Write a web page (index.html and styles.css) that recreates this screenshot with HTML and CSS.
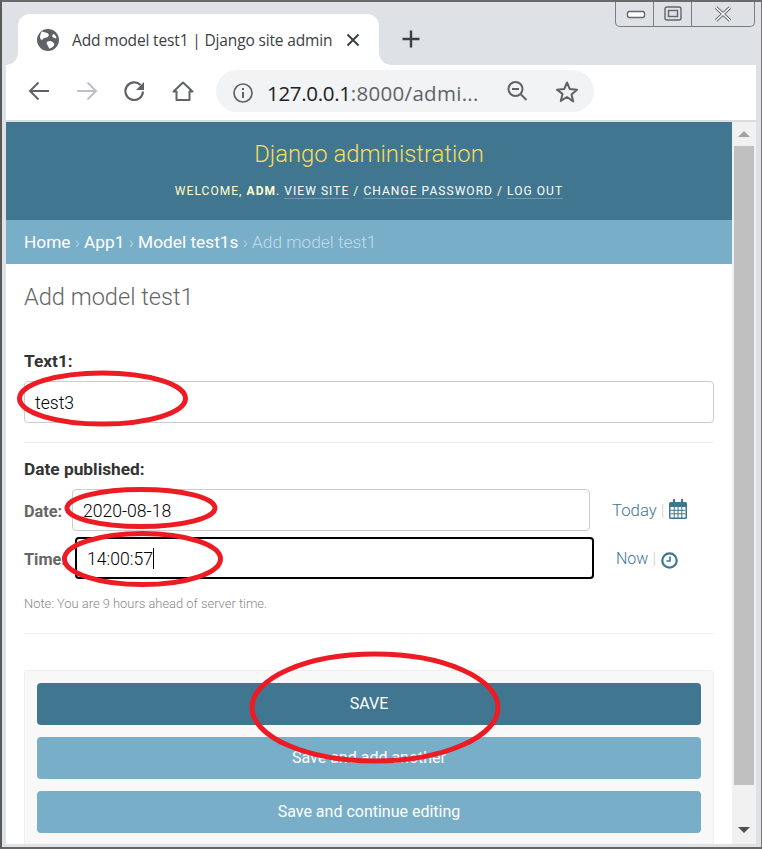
FILE: index.html
```html
<!DOCTYPE html>
<html lang="en">
<head>
<meta charset="utf-8">
<title>Add model test1 | Django site admin</title>
<link rel="stylesheet" href="styles.css">
</head>
<body>
<div class="window">
  <div class="tabstrip">
    <div class="tab">
      <svg class="globe" width="24" height="24" viewBox="0 0 24 24"><circle cx="12" cy="12" r="11" fill="#5f6368"/><path d="M6 3.500c2 1 5 1 6.500 2.500 1 1.500-.5 3-2 3.500-1.500.5-3 0-3.500 1.500-.5 1.500-2 1-3-1C4 8 4.500 5 6 3.500zM11 14c2-1.500 4-1 5.500 0 1.500 1 2 2 1.500 3.500-1 1.500-3 3-5 3-.5-2-1-3-2-4-.5-1-.5-1.800 0-2.500zM17 6c1.500 0 3 2 3.500 4-1.500.5-3 0-4-1-.5-1 0-2 .5-3z" fill="#fff"/></svg>
      <span class="tab-title">Add model test1 | Django site admin</span>
      <svg class="tab-close" width="14" height="14" viewBox="0 0 14 14"><path d="M1.500 1.500l11 11M12.500 1.500l-11 11" stroke="#3c4043" stroke-width="2" fill="none"/></svg>
    </div>
    <svg class="new-tab" width="20" height="20" viewBox="0 0 20 20"><path d="M10 1.500v17M1.500 10h17" stroke="#3c4043" stroke-width="2.400" fill="none"/></svg>
  </div>
  <div class="toolbar">
    <svg class="tool" width="24" height="24" viewBox="0 0 24 24"><path d="M22 12H3.500M11.500 3.500L3 12l8.500 8.500" stroke="#5f6368" stroke-width="2" fill="none"/></svg>
    <svg class="tool" width="24" height="24" viewBox="0 0 24 24"><path d="M2 12h18.500M12.500 3.500L21 12l-8.500 8.500" stroke="#bdc1c6" stroke-width="2" fill="none"/></svg>
    <svg class="tool" width="24" height="24" viewBox="0 0 24 24"><path d="M20 12.500A8.800 8.800 0 1 1 17.500 6" stroke="#5f6368" stroke-width="2.200" fill="none"/><path d="M21 3v8h-8z" fill="#5f6368"/></svg>
    <svg class="tool" width="24" height="24" viewBox="0 0 24 24"><path d="M12 3.500L2.500 12.500H5.500V21H18.500V12.500H21.500z" stroke="#5f6368" stroke-width="2" stroke-linejoin="round" fill="none"/></svg>
    <div class="omnibox">
      <svg class="info" width="20" height="20" viewBox="0 0 20 20"><circle cx="10" cy="10" r="9" stroke="#5f6368" stroke-width="1.700" fill="none"/><path d="M10 9v6M10 5v2" stroke="#5f6368" stroke-width="2" fill="none"/></svg>
      <span class="url"><span class="host">127.0.0.1</span>:8000/admi...</span>
      <svg class="zoomout" width="22" height="22" viewBox="0 0 22 22"><circle cx="9.500" cy="9" r="7" stroke="#5f6368" stroke-width="2" fill="none"/><path d="M6 9h7M14.500 14l6 6" stroke="#5f6368" stroke-width="2" fill="none"/></svg>
      <svg class="star" width="24" height="24" viewBox="0 0 24 24"><path d="M12 2.500l2.800 6.600 7.200.6-5.500 4.700 1.700 7L12 17l-6.200 3.900 1.700-7L2 9.700l7.200-.6z" stroke="#5f6368" stroke-width="2" stroke-linejoin="round" fill="none"/></svg>
    </div>
  </div>
  <div class="viewport">
    <main class="page">
      <header class="site-header">
        <h1 class="branding">Django administration</h1>
        <div class="user-tools">WELCOME, <strong>ADM</strong>. <a class="tool-link">VIEW SITE</a> / <a class="tool-link">CHANGE PASSWORD</a> / <a class="tool-link">LOG OUT</a></div>
      </header>
      <nav class="breadcrumbs"><a>Home</a> › <a>App1</a> › <a>Model test1s</a> › Add model test1</nav>
      <section class="content">
        <h2 class="title">Add model test1</h2>
        <div class="form-row">
          <div class="field-label">Text1:</div>
          <div class="input input-full">test3</div>
        </div>
        <div class="form-row form-row-date">
          <div class="field-label">Date published:</div>
          <div class="split-row">
            <span class="sub-label sub-label-date">Date:</span>
            <div class="input input-date">2020-08-18</div>
            <span class="shortcuts shortcuts-date"><a>Today</a> <span class="sep">|</span>
              <svg class="cal" width="18" height="20" viewBox="0 0 18 20"><path d="M1.500 3h15a1.500 1.500 0 0 1 1.500 1.500v14a1.500 1.500 0 0 1-1.500 1.500h-15A1.500 1.500 0 0 1 0 18.500v-14A1.500 1.500 0 0 1 1.500 3z" fill="#417690"/><path d="M1.500 8h15v10.500h-15z" fill="#fff"/><path d="M1.500 11.300h15M1.500 14.800h15M5.200 8v11M9 8v11M12.800 8v11" stroke="#417690" stroke-width="1"/><path d="M5 1v4M13 1v4" stroke="#417690" stroke-width="2.200" stroke-linecap="round"/></svg></span>
          </div>
          <div class="split-row split-row-time">
            <span class="sub-label sub-label-time">Time:</span>
            <div class="input input-time">14:00:57<span class="caret"></span></div>
            <span class="shortcuts shortcuts-time"><a>Now</a> <span class="sep">|</span>
              <svg class="clock" width="17" height="17" viewBox="0 0 17 17"><circle cx="8.500" cy="8.500" r="7.200" stroke="#417690" stroke-width="2.200" fill="none"/><path d="M9 4.500V9H5.500" stroke="#417690" stroke-width="1.600" fill="none"/></svg></span>
          </div>
          <p class="help">Note: You are 9 hours ahead of server time.</p>
        </div>
        <div class="submit-row">
          <button class="btn btn-default">SAVE</button>
          <button class="btn">Save and add another</button>
          <button class="btn">Save and continue editing</button>
        </div>
      </section>
    </main>
    <div class="scrollbar">
      <span class="arrow arrow-up"></span>
      <div class="thumb"></div>
      <span class="arrow arrow-down"></span>
    </div>
  </div>
  <div class="window-controls">
    <span class="ctl"><svg width="26" height="12" viewBox="0 0 26 12"><rect x="5.500" y="3.500" width="17" height="6" rx="2" stroke="#666" fill="#fff" stroke-width="1.400"/></svg></span>
    <span class="ctl"><svg width="20" height="16" viewBox="0 0 20 16"><rect x="2" y="1" width="16" height="13" rx="2" stroke="#666" fill="none" stroke-width="1.400"/><rect x="5.500" y="4.500" width="9" height="6" stroke="#666" fill="none" stroke-width="1.400"/></svg></span>
    <span class="ctl ctl-close"><svg width="18" height="16" viewBox="0 0 18 16"><path d="M2 1.500l14 13M16 1.500l-14 13" stroke="#666" stroke-width="3.200" fill="none"/><path d="M2 1.500l14 13M16 1.500l-14 13" stroke="#fff" stroke-width="1.400" fill="none"/></svg></span>
  </div>
  <svg class="annotations" width="762" height="849" viewBox="0 0 762 849">
    <g fill="none" stroke="#ed1c24" stroke-width="5">
      <ellipse cx="102.500" cy="398.500" rx="83" ry="25.500"/>
      <ellipse cx="141" cy="508" rx="74" ry="18.500"/>
      <ellipse cx="142.500" cy="559" rx="78" ry="25.500"/>
      <ellipse cx="375" cy="707.500" rx="123" ry="53.500"/>
    </g>
  </svg>
</div>
</body>
</html>
```
FILE: styles.css
```css
* { box-sizing: border-box; }
html, body { margin: 0; padding: 0; }
body { width: 762px; height: 849px; overflow: hidden; font-family: Roboto, "Liberation Sans", sans-serif; background: #dee1e6; }
.window { position: relative; width: 762px; height: 849px; display: flex; flex-direction: column; background: #dee1e6; border-top: 2px solid #6b6b6b; border-left: 2px solid #5a5a5a; border-right: 1px solid #777; border-bottom: 2px solid #666; padding: 0 5px 3px 4px; }

.tabstrip { height: 63px; flex: none; display: flex; align-items: flex-start; padding: 12px 0 0 12px; }
.tab { position: relative; width: 361px; height: 51px; background: #fff; border-radius: 12px 12px 0 0; display: flex; align-items: center; padding: 0 19px 0 18px; }
.tab::before, .tab::after { content: ""; position: absolute; bottom: 0; width: 12px; height: 12px; }
.tab::before { left: -12px; background: radial-gradient(circle at 0 0, #dee1e6 11.5px, #fff 12px); }
.tab::after { right: -12px; background: radial-gradient(circle at 100% 0, #dee1e6 11.5px, #fff 12px); }
.globe { flex: none; margin-right: 12px; }
.tab-title { flex: 1; font: 15.5px "Open Sans", sans-serif; color: #3c4043; white-space: nowrap; overflow: hidden; letter-spacing: -.15px; }
.tab-close { flex: none; margin-left: 8px; }
.new-tab { flex: none; margin: 15px 0 0 22px; }

.toolbar { height: 55px; flex: none; background: #fff; display: flex; align-items: center; padding: 0 0 3px 21px; }
.tool { flex: none; margin-right: 24px; }
.omnibox { width: 378px; height: 42px; margin: 0 0 0 -3px; border-radius: 21px; background: #f1f3f4; display: flex; align-items: center; padding: 3px 0 0 17px; }
.info { flex: none; margin-right: 14px; }
.url { flex: none; width: 229px; font: 20.5px "Open Sans", sans-serif; letter-spacing: .3px; color: #5f6368; white-space: nowrap; }
.host { color: #202124; letter-spacing: -.3px; }
.zoomout { flex: none; margin: -3px 0 0 10px; }
.star { flex: none; margin: -2px 0 0 27px; }

.viewport { flex: 1; min-height: 0; display: flex; background: #fff; border-top: 2px solid #dadce0; }
.page { width: 726px; flex: none; overflow: hidden; background: #fff; }
.site-header { height: 98px; background: #417690; text-align: center; padding-top: 18px; }
.branding { margin: 0; font-size: 23.8px; font-weight: 300; line-height: 29px; color: #f5dd5d; }
.user-tools { margin-top: 13px; font-size: 12px; line-height: 18px; letter-spacing: 1.05px; color: #ffc; }
.user-tools strong { font-weight: 700; }
.tool-link { color: #fff; border-bottom: 1px solid rgba(255,255,255,.25); }
.breadcrumbs { height: 44px; background: #79aec8; padding: 1px 18px 0; font-size: 17.3px; line-height: 43px; font-weight: 300; color: #c4dce8; white-space: nowrap; }
.breadcrumbs a { color: #fff; font-weight: 400; }
.content { padding: 0 18px; }
.title { margin: 0; padding-top: 18px; font-size: 23.6px; font-weight: 300; line-height: 30px; color: #666; }
.form-row { margin-top: 40px; padding-bottom: 19px; border-bottom: 1px solid #eee; }
.field-label { font-size: 17.3px; font-weight: 700; line-height: 18px; color: #333; margin-bottom: 11px; }
.input { display: flex; align-items: center; border: 1px solid #ccc; border-radius: 4px; height: 42px; padding: 1px 10px 0; font-size: 17.6px; font-weight: 300; color: #000; background: #fff; }
.input-full { width: 690px; }
.form-row-date { margin-top: 0; padding-top: 17px; padding-bottom: 0; height: 191px; }
.split-row { display: flex; align-items: center; height: 42px; }
.split-row-time { margin-top: 6px; }
.sub-label { flex: none; padding-top: 2px; font-size: 16.3px; font-weight: 700; color: #666; white-space: nowrap; }
.sub-label-date { width: 48px; }
.sub-label-time { width: 51px; }
.input-date { width: 518px; }
.input-time { width: 519px; border: 2px solid #000; }
.caret { display: inline-block; width: 1px; height: 21px; background: #000; }
.shortcuts { display: flex; align-items: center; gap: 4px; margin-left: 22px; font-size: 16.8px; font-weight: 300; color: #417690; white-space: nowrap; }
.shortcuts-time { font-size: 16px; }
.sep { color: #ccc; }
.cal { margin: -2px 0 0 0; }
.clock { margin: 4px 0 0 1px; }
.help { margin: 16px 0 0; font-size: 12.9px; line-height: 18px; font-weight: 300; color: #888; white-space: nowrap; }
.submit-row { margin-top: 36px; padding: 12px; background: #f8f8f8; border: 1px solid #eee; border-radius: 4px; display: flex; flex-direction: column; gap: 12px; }
.btn { display: block; width: 100%; height: 42px; border: 0; border-radius: 4px; background: #79aec8; color: #fff; font: 400 16px Roboto, sans-serif; padding: 0 0 2px; }
.btn-default { background: #417690; }

.scrollbar { flex: 1; background: #f1f1f1; display: flex; flex-direction: column; align-items: center; }
.thumb { flex: none; width: 20px; height: 639px; background: #c0c0c0; }
.arrow { flex: none; width: 0; height: 0; border-left: 6px solid transparent; border-right: 6px solid transparent; }
.arrow-up { margin: 9px 0 9px; border-bottom: 6px solid #a3a3a3; }
.arrow-down { margin: 42px 0 0; border-top: 6px solid #505050; }

.window-controls { position: absolute; top: 0; right: 6px; width: 140px; height: 25px; display: flex; border: 1px solid #7d7d7d; border-top: 0; border-radius: 0 0 5px 5px; background: #dee1e6; }
.ctl { width: 38px; flex: none; display: flex; align-items: center; justify-content: center; border-right: 1px solid #7d7d7d; }
.ctl-close { flex: 1; border-right: 0; }
.annotations { position: absolute; top: -2px; left: -2px; pointer-events: none; }
```
